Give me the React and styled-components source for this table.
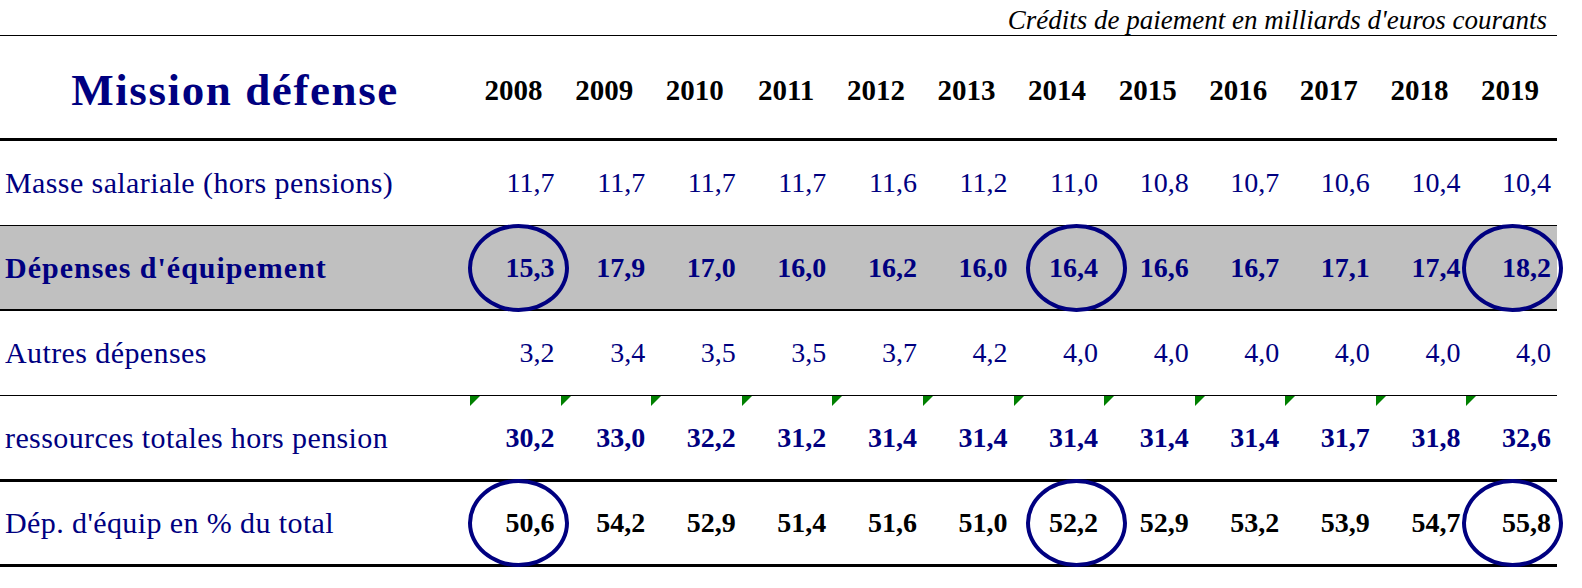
import styled, { createGlobalStyle } from "styled-components";

const navy = "#000080";

const years = [2008, 2009, 2010, 2011, 2012, 2013, 2014, 2015, 2016, 2017, 2018, 2019];

const rows = [
  {
    label: "Masse salariale (hors pensions)",
    values: ["11,7", "11,7", "11,7", "11,7", "11,6", "11,2", "11,0", "10,8", "10,7", "10,6", "10,4", "10,4"],
    height: 84,
    line: 1,
  },
  {
    label: "Dépenses d'équipement",
    values: ["15,3", "17,9", "17,0", "16,0", "16,2", "16,0", "16,4", "16,6", "16,7", "17,1", "17,4", "18,2"],
    height: 83,
    line: 2,
    bold: true,
    shaded: true,
    circled: true,
  },
  {
    label: "Autres dépenses",
    values: ["3,2", "3,4", "3,5", "3,5", "3,7", "4,2", "4,0", "4,0", "4,0", "4,0", "4,0", "4,0"],
    height: 84,
    line: 1,
  },
  {
    label: "ressources totales hors pension",
    values: ["30,2", "33,0", "32,2", "31,2", "31,4", "31,4", "31,4", "31,4", "31,4", "31,7", "31,8", "32,6"],
    height: 83,
    line: 3,
    bold: true,
    flagged: true,
  },
  {
    label: "Dép. d'équip en % du total",
    values: ["50,6", "54,2", "52,9", "51,4", "51,6", "51,0", "52,2", "52,9", "53,2", "53,9", "54,7", "55,8"],
    height: 82,
    line: 3,
    bold: true,
    black: true,
    circled: true,
  },
];

// offset of the hand-drawn circle from the start of its column
const circles = { 0: -2, 6: 12, 11: -4 };

const App = () => {
  return (
    <>
      <GlobalStyle />
      <Sheet>
        <Caption>Crédits de paiement en milliards d'euros courants</Caption>
        <Row $height={102} $line={3}>
          <Title>Mission défense</Title>
          {years.map((y) => (
            <Year key={y}>{y}</Year>
          ))}
        </Row>
        {rows.map((r) => (
          <Row key={r.label} $height={r.height} $line={r.line} $shaded={r.shaded}>
            <Label $bold={r.bold && r.shaded}>{r.label}</Label>
            {r.values.map((v, i) => (
              <Num key={i} $bold={r.bold} $black={r.black}>
                {r.flagged && <Flag />}
                {v}
                {r.circled && circles[i] !== undefined && <Circle $left={circles[i]} />}
              </Num>
            ))}
          </Row>
        ))}
      </Sheet>
    </>
  );
};

const GlobalStyle = createGlobalStyle`
  body {
    margin: 0;
    background: #fff;
    font-family: "Liberation Serif", "Times New Roman", serif;
  }
`;

const Sheet = styled.div`
  width: 1557px;
`;

const Caption = styled.div`
  height: 35px;
  border-bottom: 1px solid #000;
  display: flex;
  align-items: flex-end;
  justify-content: flex-end;
  padding-right: 10px;
  font-style: italic;
  font-size: 27px;
  line-height: 30px;
  color: #000;
`;

const Row = styled.div`
  display: grid;
  grid-template-columns: 470px repeat(12, 1fr);
  height: ${(p) => p.$height}px;
  border-bottom: ${(p) => p.$line}px solid #000;
  background: ${(p) => (p.$shaded ? "#c0c0c0" : "transparent")};
`;

const Title = styled.div`
  display: flex;
  align-items: center;
  justify-content: center;
  font-size: 45px;
  font-weight: bold;
  letter-spacing: 1.6px;
  color: ${navy};
  padding-top: 6px;
`;

const Year = styled.div`
  display: flex;
  align-items: center;
  justify-content: flex-end;
  padding-right: 18px;
  font-size: 29px;
  font-weight: bold;
  color: #000;
  padding-top: 6px;
`;

const Label = styled.div`
  display: flex;
  align-items: center;
  padding-left: 5px;
  font-size: 30px;
  font-weight: ${(p) => (p.$bold ? "bold" : "normal")};
  letter-spacing: ${(p) => (p.$bold ? "1px" : "0.4px")};
  color: ${navy};
  white-space: nowrap;
`;

const Num = styled.div`
  position: relative;
  display: flex;
  align-items: center;
  justify-content: flex-end;
  padding-right: 6px;
  font-size: 28px;
  font-weight: ${(p) => (p.$bold ? "bold" : "normal")};
  color: ${(p) => (p.$black ? "#000" : navy)};
`;

const Flag = styled.span`
  position: absolute;
  top: 0;
  left: 0;
  width: 0;
  height: 0;
  border-top: 10px solid #008000;
  border-right: 10px solid transparent;
`;

const Circle = styled.span`
  position: absolute;
  top: 50%;
  left: ${(p) => p.$left}px;
  width: 101px;
  height: 88px;
  box-sizing: border-box;
  transform: translateY(-50%);
  border: 4px solid ${navy};
  border-radius: 50%;
`;

export default App;
